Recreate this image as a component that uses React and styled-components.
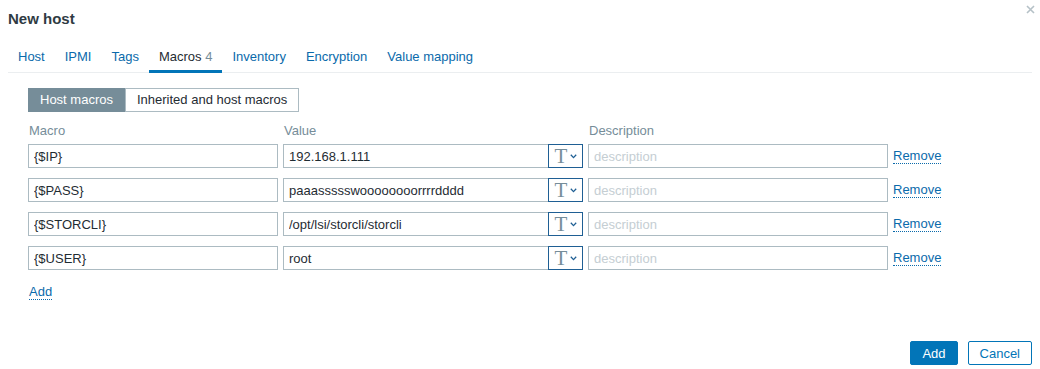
import React from "react";
import styled, { createGlobalStyle } from "styled-components";

const Global = createGlobalStyle`
  html, body { margin: 0; padding: 0; background: #fff; }
  body { font-family: Arial, "Liberation Sans", sans-serif; font-size: 13px; color: #1f2c33; }
  * { box-sizing: border-box; }
`;

const Dialog = styled.div`
  position: relative;
  width: 1040px;
  height: 369px;
  display: flex;
  flex-direction: column;
  padding: 0 8px;
`;

const Header = styled.div`
  height: 42px;
  padding-top: 10px;
`;

const Title = styled.h4`
  margin: 0;
  font-size: 15px;
  line-height: 18px;
  font-weight: bold;
  color: #2f3b43;
`;

const Close = styled.button`
  position: absolute;
  top: 2px;
  right: 3px;
  width: 14px;
  height: 14px;
  border: 0;
  padding: 0;
  background: transparent;
  display: flex;
  align-items: center;
  justify-content: center;
`;

const TabList = styled.div`
  display: flex;
  border-bottom: 1px solid #ebeef0;
  height: 31px;
`;

const Tab = styled.div`
  padding: 7px 10px 0;
  height: 31px;
  line-height: 15px;
  color: ${(p) => (p.$active ? "#1f2c33" : "#0a6aab")};
  border-bottom: 3px solid ${(p) => (p.$active ? "#0275b8" : "transparent")};
  margin-bottom: -1px;
  white-space: nowrap;
`;

const Count = styled.span`
  color: #768d99;
`;

const Panel = styled.div`
  padding: 15px 0 0 20px;
  flex: 1;
  display: flex;
  flex-direction: column;
`;

const RadioGroup = styled.div`
  display: flex;
  height: 24px;
`;

const Radio = styled.div`
  height: 24px;
  line-height: 22px;
  padding: 0 11px;
  border: 1px solid ${(p) => (p.$active ? "#768d99" : "#acbbc2")};
  background: ${(p) => (p.$active ? "#768d99" : "#fff")};
  color: ${(p) => (p.$active ? "#fff" : "#1f2c33")};
  white-space: nowrap;
`;

const Grid = styled.div`
  display: grid;
  grid-template-columns: 250px 5px 300px 5px 300px 5px auto;
  row-gap: 10px;
  margin-top: 11px;
  align-items: center;
`;

const HeadCell = styled.div`
  color: #768d99;
  line-height: 15px;
  margin-bottom: -4px;
  padding-left: 1px;
  grid-column: ${(p) => p.$col};
`;

const Input = styled.input`
  height: 24px;
  width: 100%;
  border: 1px solid #acbbc2;
  padding: 0 5px;
  font-family: Arial, "Liberation Sans", sans-serif;
  font-size: 13px;
  color: #1f2c33;
  background: #fff;
  outline: none;
  grid-column: ${(p) => p.$col};
  &::placeholder { color: #c5ced3; }
`;

const ValueWrap = styled.div`
  grid-column: 3;
  display: flex;
  height: 24px;
`;

const ValueInput = styled(Input)`
  flex: 1;
  width: auto;
  min-width: 0;
  border-right: 0;
`;

const TypeButton = styled.div`
  width: 35px;
  height: 24px;
  border: 1px solid #1f5f94;
  display: flex;
  align-items: center;
  justify-content: center;
  gap: 3px;
  padding-left: 1px;
`;

const TGlyph = styled.span`
  font-family: "Liberation Serif", "Times New Roman", serif;
  font-size: 21px;
  line-height: 20px;
  color: #768d99;
`;

const Link = styled.a`
  color: #0a6aab;
  text-decoration: none;
  border-bottom: 1px dotted #0a6aab;
  line-height: 15px;
  cursor: pointer;
  justify-self: start;
  grid-column: ${(p) => p.$col || "auto"};
`;

const AddRow = styled.div`
  margin-top: 14px;
  padding-left: 1px;
  display: flex;
`;

const Footer = styled.div`
  display: flex;
  justify-content: flex-end;
  gap: 10px;
  padding-bottom: 4px;
`;

const Button = styled.button`
  height: 24px;
  padding: 0 11px;
  font-family: Arial, "Liberation Sans", sans-serif;
  font-size: 13px;
  border: 1px solid #0275b8;
  background: ${(p) => (p.$primary ? "#0275b8" : "#fff")};
  color: ${(p) => (p.$primary ? "#fff" : "#0275b8")};
  border-radius: 2px;
`;

const Chevron = () => (
  <svg width="7" height="5" viewBox="0 0 7 5">
    <path d="M0.8 0.8 L3.5 3.6 L6.2 0.8" fill="none" stroke="#1f5f94" strokeWidth="1.3" />
  </svg>
);

const rows = [
  ["{$IP}", "192.168.1.111"],
  ["{$PASS}", "paaassssswoooooooorrrrdddd"],
  ["{$STORCLI}", "/opt/lsi/storcli/storcli"],
  ["{$USER}", "root"],
];

const tabs = ["Host", "IPMI", "Tags", "Macros", "Inventory", "Encryption", "Value mapping"];

export default function App() {
  return (
    <>
      <Global />
      <Dialog>
        <Header>
          <Title>New host</Title>
        </Header>
        <Close aria-label="Close">
          <svg width="9" height="9" viewBox="0 0 9 9">
            <path d="M1 1 L8 8 M8 1 L1 8" stroke="#b5c1c7" strokeWidth="1.6" />
          </svg>
        </Close>
        <TabList>
          {tabs.map((t) => (
            <Tab key={t} $active={t === "Macros"}>
              {t}
              {t === "Macros" && <Count> 4</Count>}
            </Tab>
          ))}
        </TabList>
        <Panel>
          <RadioGroup>
            <Radio $active>Host macros</Radio>
            <Radio>Inherited and host macros</Radio>
          </RadioGroup>
          <Grid>
            <HeadCell $col={1}>Macro</HeadCell>
            <HeadCell $col={3}>Value</HeadCell>
            <HeadCell $col={5}>Description</HeadCell>
            {rows.map(([m, v]) => (
              <React.Fragment key={m}>
                <Input $col={1} defaultValue={m} />
                <ValueWrap>
                  <ValueInput defaultValue={v} />
                  <TypeButton>
                    <TGlyph>T</TGlyph>
                    <Chevron />
                  </TypeButton>
                </ValueWrap>
                <Input $col={5} placeholder="description" />
                <Link $col={7}>Remove</Link>
              </React.Fragment>
            ))}
          </Grid>
          <AddRow>
            <Link>Add</Link>
          </AddRow>
        </Panel>
        <Footer>
          <Button $primary>Add</Button>
          <Button>Cancel</Button>
        </Footer>
      </Dialog>
    </>
  );
}
